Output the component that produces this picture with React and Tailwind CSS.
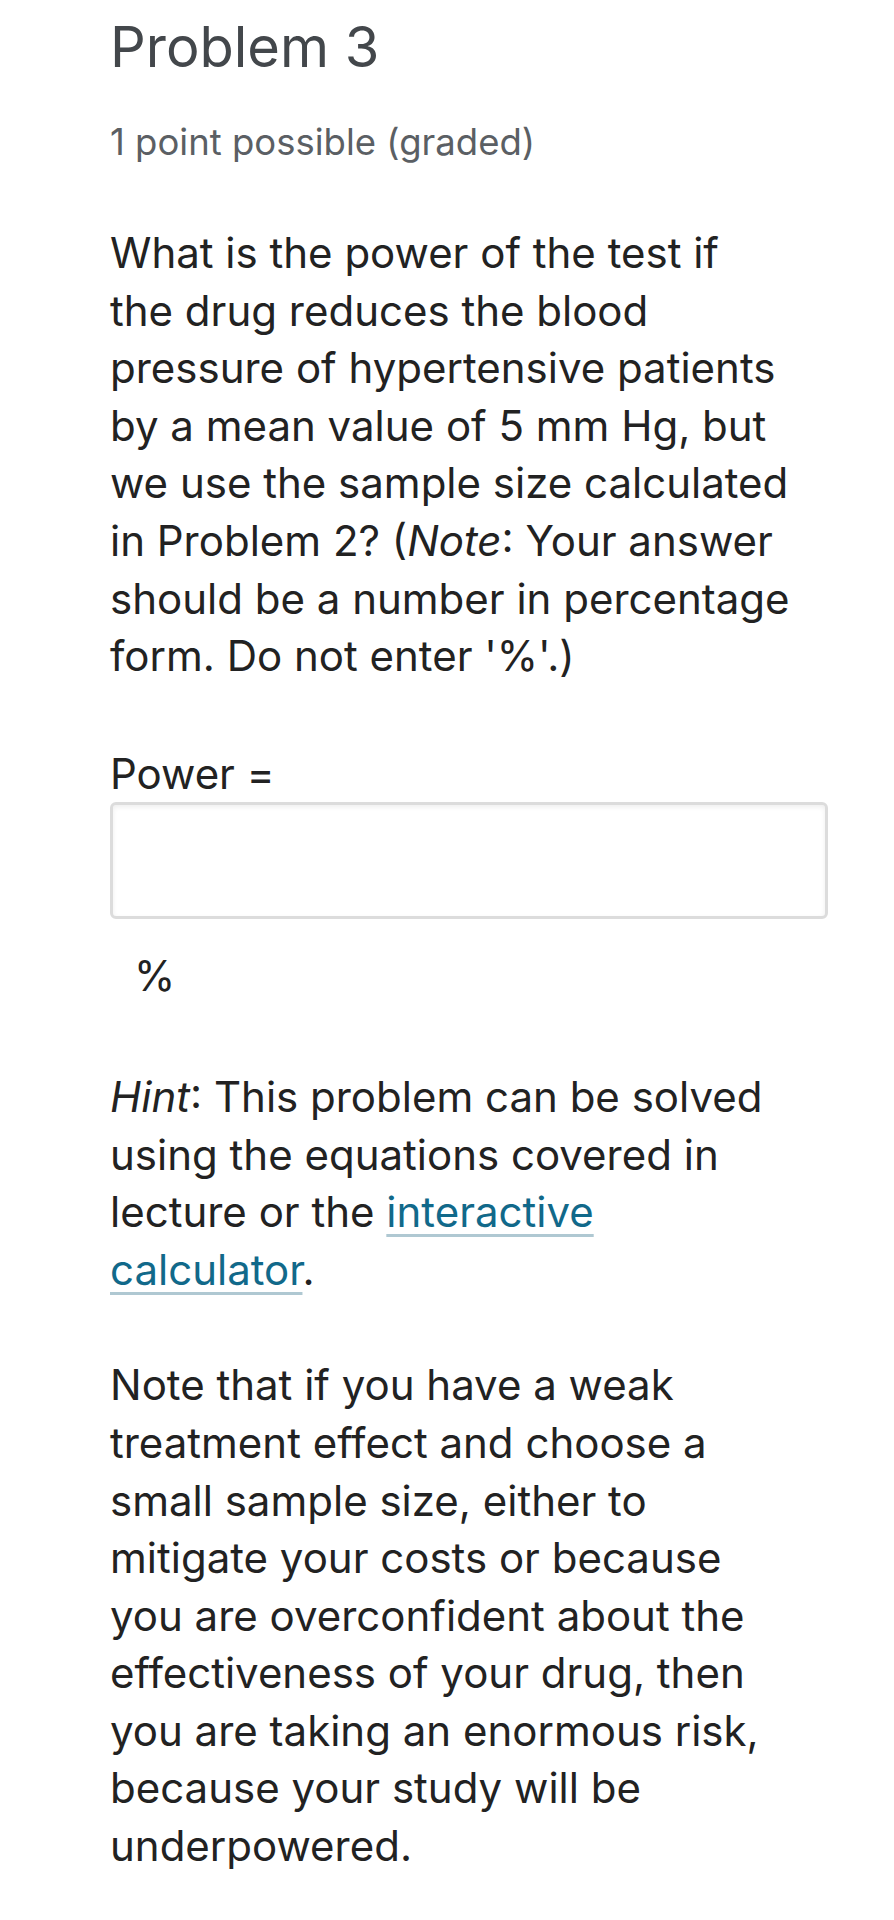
export default function App() {
  return (
    <div className="min-h-[1920px] bg-white pl-[110px] pr-[66px]" style={{ fontFamily: 'Inter, "Noto Sans", sans-serif' }}>
      <h2 className="pt-[14px] text-[56px] leading-[66px] font-normal text-[#43474b]">Problem 3</h2>
      <div className="mt-[37px] text-[36.5px] leading-[50px] text-[#5b5f64]">1 point possible (graded)</div>
      <div className="mt-[57px] text-[42px] leading-[57.6px] text-[#222222]">
        <p className="max-w-[700px]">
          What is the power of the test if<br />
          the drug reduces the blood<br />
          pressure of hypertensive patients<br />
          by a mean value of 5 mm Hg, but<br />
          we use the sample size calculated<br />
          in Problem 2? (<em>Note</em>: Your answer<br />
          should be a number in percentage<br />
          form. Do not enter '%'.)
        </p>
        <p className="mt-[60px]">Power =</p>
        <div className="h-[117px] w-full rounded-[6px] border-[3px] border-[#dcdcdc] bg-white shadow-[inset_0_2px_5px_rgba(0,0,0,0.07)]"></div>
        <p className="mt-[28px] pl-[24px]">%</p>
        <p className="mt-[63px] max-w-[677px]">
          <em>Hint</em>: This problem can be solved using the equations covered in lecture or the{' '}
          <a href="#" className="text-[#11698a] underline decoration-[#afc8d2] decoration-[3px] underline-offset-[7px]">interactive calculator</a>.
        </p>
        <p className="mt-[58px] max-w-[677px]">
          Note that if you have a weak treatment effect and choose a small sample size, either to mitigate your costs or because you are overconfident about the effectiveness of your drug, then you are taking an enormous risk, because your study will be underpowered.
        </p>
      </div>
    </div>
  );
}
